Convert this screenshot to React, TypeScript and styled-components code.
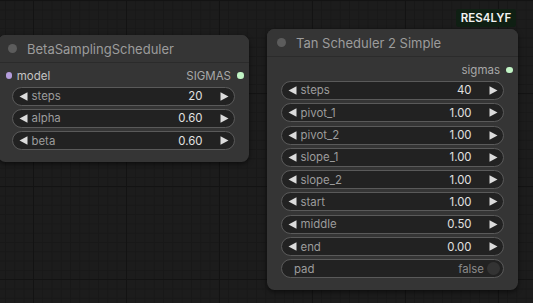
import React from "react";
import styled, { createGlobalStyle } from "styled-components";

const Global = createGlobalStyle`
  html, body { margin: 0; padding: 0; background: #1c1c1c; }
  body { font-family: Inter, "Noto Sans", Arial, sans-serif; }
  * { box-sizing: border-box; }
`;

const Canvas = styled.div`
  position: relative;
  width: 533px;
  height: 303px;
  overflow: hidden;
  background-color: #1c1c1c;
  background-image:
    linear-gradient(to right, #131313 1px, transparent 1px),
    linear-gradient(to bottom, #131313 1px, transparent 1px),
    linear-gradient(to right, #181818 1px, transparent 1px),
    linear-gradient(to bottom, #181818 1px, transparent 1px);
  background-size: 93px 100%, 100% 93px, 9.3px 100%, 100% 9.3px;
  background-position: 33px 0, 0 0, 5px 0, 0 0.3px;
`;

const NodeBox = styled.div<{ $x: number; $y: number; $w: number }>`
  position: absolute;
  left: ${(p) => p.$x}px;
  top: ${(p) => p.$y}px;
  width: ${(p) => p.$w}px;
  background: #353535;
  border-radius: 7.5px;
  box-shadow: 0 2px 5px rgba(0, 0, 0, 0.55);
  padding-bottom: 11.5px;
`;

const TitleBar = styled.div`
  height: 28px;
  display: flex;
  align-items: center;
  border-bottom: 1px solid #2b2b2b;
  border-radius: 7.5px 7.5px 0 0;
  background: #353535;
`;

const TitleDot = styled.span`
  width: 9px;
  height: 9px;
  border-radius: 50%;
  background: #5c5c5c;
  margin-left: 9.5px;
  flex: none;
`;

const TitleText = styled.span`
  margin-left: 10.5px;
  margin-top: 1px;
  font-size: 13px;
  color: #9c9c9c;
  white-space: nowrap;
`;

const SlotRow = styled.div`
  height: 18.6px;
  margin-top: 3.4px;
  display: flex;
  align-items: center;
  font-size: 11.5px;
`;

const SlotDot = styled.span<{ $color: string }>`
  width: 6.5px;
  height: 6.5px;
  border-radius: 50%;
  background: ${(p) => p.$color};
  flex: none;
`;

const InSlot = styled.div`
  display: flex;
  align-items: center;
  margin-left: 7.8px;
  gap: 4.5px;
  color: #c4c4c4;
`;

const OutSlot = styled.div`
  display: flex;
  align-items: center;
  margin-left: auto;
  margin-right: 5.5px;
  gap: 6px;
  color: #a8a8a8;
`;

const Widgets = styled.div`
  display: flex;
  flex-direction: column;
  gap: 3.3px;
  margin: 1.7px 14px 0;
`;

const Widget = styled.div`
  height: 19px;
  border-radius: 10px;
  border: 1px solid #5a5a5a;
  background: #222222;
  display: flex;
  align-items: center;
  font-size: 11.4px;
  white-space: nowrap;
`;

const Label = styled.span<{ $pad?: number }>`
  color: #9c9c9c;
  margin-left: ${(p) => p.$pad ?? 4}px;
  flex: 1;
`;

const Value = styled.span`
  color: #e0e0e0;
  margin-right: 17px;
`;

const FalseText = styled.span`
  color: #8a8a8a;
  margin-right: 2.5px;
`;

const Knob = styled.span`
  width: 13px;
  height: 13px;
  border-radius: 50%;
  background: #333333;
  margin-right: 3.5px;
  flex: none;
`;

const ArrowSvg = styled.svg<{ $side: "l" | "r" }>`
  width: 9px;
  height: 9px;
  flex: none;
  margin-left: ${(p) => (p.$side === "l" ? "5.5px" : "0")};
  margin-right: ${(p) => (p.$side === "r" ? "5.5px" : "0")};
`;

const Badge = styled.div`
  position: absolute;
  left: 456px;
  top: 9px;
  width: 60px;
  height: 18px;
  border-radius: 3px;
  background: #0f1f13;
  color: #f2f2f2;
  font-size: 11.5px;
  font-weight: 600;
  display: flex;
  align-items: center;
  justify-content: center;
`;

const Arrow = ({ side }: { side: "l" | "r" }) => (
  <ArrowSvg $side={side} viewBox="0 0 9 9">
    {side === "l" ? (
      <polygon points="0.5,4.5 8.5,0.3 8.5,8.7" fill="#dcdcdc" />
    ) : (
      <polygon points="8.5,4.5 0.5,0.3 0.5,8.7" fill="#dcdcdc" />
    )}
  </ArrowSvg>
);

type W = { kind: "num"; label: string; value: string } | { kind: "toggle"; label: string; value: string };

const NumberWidget = ({ label, value }: { label: string; value: string }) => (
  <Widget>
    <Arrow side="l" />
    <Label>{label}</Label>
    <Value>{value}</Value>
    <Arrow side="r" />
  </Widget>
);

const ToggleWidget = ({ label, value }: { label: string; value: string }) => (
  <Widget>
    <Label $pad={12}>{label}</Label>
    <FalseText>{value}</FalseText>
    <Knob />
  </Widget>
);

type NodeProps = {
  x: number;
  y: number;
  title: string;
  input?: { name: string; color: string };
  output: { name: string; color: string };
  widgets: W[];
};

const Node = ({ x, y, title, input, output, widgets }: NodeProps) => (
  <NodeBox $x={x} $y={y} $w={251}>
    <TitleBar>
      <TitleDot />
      <TitleText>{title}</TitleText>
    </TitleBar>
    <SlotRow>
      {input && (
        <InSlot>
          <SlotDot $color={input.color} />
          <span>{input.name}</span>
        </InSlot>
      )}
      <OutSlot>
        <span>{output.name}</span>
        <SlotDot $color={output.color} />
      </OutSlot>
    </SlotRow>
    <Widgets>
      {widgets.map((w) =>
        w.kind === "num" ? (
          <NumberWidget key={w.label} label={w.label} value={w.value} />
        ) : (
          <ToggleWidget key={w.label} label={w.label} value={w.value} />
        )
      )}
    </Widgets>
  </NodeBox>
);

const n = (label: string, value: string): W => ({ kind: "num", label, value });

export default function App() {
  return (
    <>
      <Global />
      <Canvas>
        <Node
          x={-2}
          y={35}
          title="BetaSamplingScheduler"
          input={{ name: "model", color: "#b49ddc" }}
          output={{ name: "SIGMAS", color: "#c2f5c6" }}
          widgets={[n("steps", "20"), n("alpha", "0.60"), n("beta", "0.60")]}
        />
        <Node
          x={267}
          y={29.3}
          title="Tan Scheduler 2 Simple"
          output={{ name: "sigmas", color: "#c2f5c6" }}
          widgets={[
            n("steps", "40"),
            n("pivot_1", "1.00"),
            n("pivot_2", "1.00"),
            n("slope_1", "1.00"),
            n("slope_2", "1.00"),
            n("start", "1.00"),
            n("middle", "0.50"),
            n("end", "0.00"),
            { kind: "toggle", label: "pad", value: "false" },
          ]}
        />
        <Badge>RES4LYF</Badge>
      </Canvas>
    </>
  );
}
